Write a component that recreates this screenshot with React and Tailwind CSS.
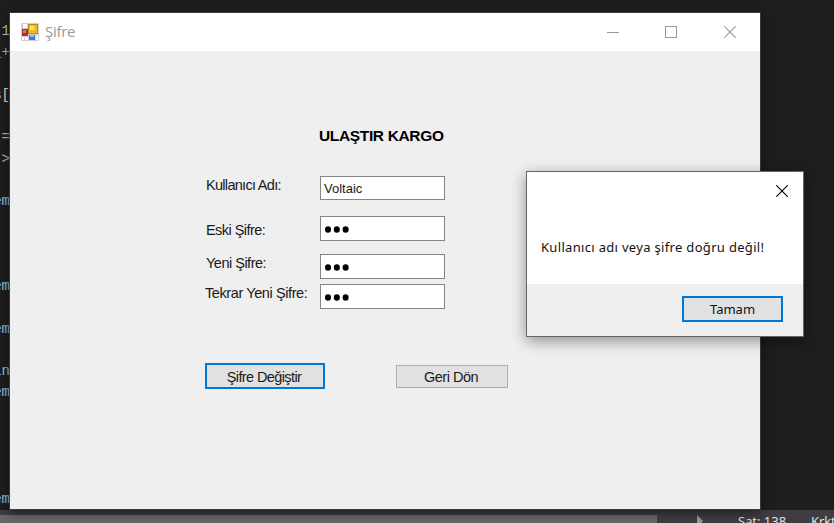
import React from 'react';

const codeRows = [
  ['1', 'text-[#b5cea8]'], ['_+', 'text-[#b4b4b4]'], ['', ''], ['s[', 'text-[#dcdcdc]'],
  ['', ''], ['=', 'text-[#b4b4b4]'], ['>', 'text-[#b4b4b4]'], ['', ''],
  ['em', 'text-[#86c6ee]'], ['', ''], ['', ''], ['', ''],
  ['em', 'text-[#86c6ee]'], ['', ''], ['em', 'text-[#86c6ee]'], ['', ''],
  ['in', 'text-[#86c6ee]'], ['em', 'text-[#86c6ee]'], ['', ''], ['', ''],
  ['', ''], ['', ''], ['em', 'text-[#86c6ee]'],
];

function Cross({ className }) {
  return (
    <svg className={className} width="12" height="12" viewBox="0 0 12 12" fill="none" stroke="currentColor" strokeWidth="1.1">
      <path d="M0.3 0.3l11.4 11.4M11.7 0.3l-11.4 11.4" />
    </svg>
  );
}

function FormIcon() {
  return (
    <svg width="18" height="18" viewBox="0 0 18 18">
      <rect width="18" height="18" rx="1" fill="#cfcfcf" />
      <rect x="2" y="1" width="4" height="4" fill="#fff" />
      <rect x="1" y="6" width="6" height="7" fill="#b5302a" />
      <rect x="2" y="7" width="3" height="3" fill="#dc7268" />
      <rect x="7" y="1" width="10" height="10" fill="#b8891c" />
      <rect x="8" y="2" width="8" height="8" fill="#f3bd22" />
      <rect x="9" y="3" width="4" height="4" fill="#ffe06b" />
      <rect x="8" y="12" width="6" height="5" fill="#3b78d8" />
      <rect x="9" y="12" width="4" height="2" fill="#8ab8f6" />
      <rect x="1" y="14" width="2" height="3" fill="#fff" />
      <rect x="4" y="14" width="3" height="3" fill="#fff" />
      <rect x="15" y="12" width="2" height="5" fill="#fff" />
    </svg>
  );
}

function Dots() {
  return (
    <svg width="26" height="9" viewBox="0 0 26 9" fill="#000">
      <ellipse cx="4" cy="4.5" rx="3" ry="3.3" />
      <ellipse cx="12.8" cy="4.5" rx="3" ry="3.3" />
      <ellipse cx="21.6" cy="4.5" rx="3" ry="3.3" />
    </svg>
  );
}

function MainWindow() {
  return (
    <section className="absolute left-[9px] top-[12px] flex h-[498px] w-[752px] flex-col border border-[#3a3a3c] bg-[#efefef] shadow-[0_3px_10px_rgba(0,0,0,0.5)]">
      <header className="flex h-[38px] shrink-0 items-center bg-white pl-[11px] text-[#999]">
        <FormIcon />
        <span className="-mt-[2px] ml-[6px] font-['Open_Sans','Noto_Sans',sans-serif] text-[15px] leading-[20px] tracking-[-0.3px]">Şifre</span>
        <div className="ml-auto flex items-center pr-[24px]">
          <span className="mr-[46px] h-px w-[12px] bg-[#999]" />
          <span className="mr-[47px] size-[12px] border border-[#999]" />
          <Cross />
        </div>
      </header>
      <main className="flex flex-col pl-[195px] font-['Liberation_Sans',Arial,sans-serif] text-[14.5px] leading-[18px] text-[#1a1a1a]">
        <h1 className="ml-[114px] mt-[76px] whitespace-nowrap text-[15.5px] font-bold leading-[18px] tracking-[-0.35px] text-black">ULAŞTIR KARGO</h1>
        <div className="mt-[31px] flex">
          <div className="flex w-[115px] flex-col whitespace-nowrap tracking-[-0.4px]">
            <label className="ml-px tracking-[-0.7px]">Kullanıcı Adı:</label>
            <label className="ml-px mt-[27px] tracking-[-0.55px]">Eski Şifre:</label>
            <label className="ml-px mt-[15px] tracking-[-0.5px]">Yeni Şifre:</label>
            <label className="mt-[12px]">Tekrar Yeni Şifre:</label>
          </div>
          <div className="flex w-[125px] flex-col">
            <div className="flex h-[24px] items-center border border-[#858585] bg-white pl-[3px] pt-[2px] text-[13px]">Voltaic</div>
            <div className="mt-[16px] flex h-[25px] items-center border border-[#858585] bg-white pl-[3px] pt-px"><Dots /></div>
            <div className="mt-[13px] flex h-[25px] items-center border border-[#858585] bg-white pl-[3px] pt-px"><Dots /></div>
            <div className="mt-[5px] flex h-[25px] items-center border border-[#858585] bg-white pl-[3px] pt-px"><Dots /></div>
          </div>
        </div>
        <div className="mt-[54px] flex items-center gap-[71px]">
          <button className="h-[26px] w-[120px] border-2 border-[#0078d7] bg-[#e1e1e1] pr-[2px] pt-px tracking-[-0.6px]">Şifre Değiştir</button>
          <button className="h-[23px] w-[112px] border border-[#adadad] bg-[#e1e1e1] pr-[2px] pt-px tracking-[-0.5px]">Geri Dön</button>
        </div>
      </main>
    </section>
  );
}

function MessageBox() {
  return (
    <section className="absolute left-[526px] top-[171px] flex h-[166px] w-[278px] flex-col border border-[#666] bg-white font-['Noto_Sans','Open_Sans',sans-serif] text-[13px] leading-[18px] text-[#111] shadow-[0_4px_14px_rgba(0,0,0,0.4)]">
      <div className="flex h-[38px] items-center justify-end pr-[15px] text-black">
        <Cross />
      </div>
      <p className="ml-[14px] mt-[28px] whitespace-nowrap tracking-[0.32px]">Kullanıcı adı veya şifre doğru değil!</p>
      <div className="mt-auto flex h-[52px] justify-end bg-[#efefef] pr-[20px] pt-[12px]">
        <button className="h-[26px] w-[101px] border-2 border-[#0078d7] bg-[#e1e1e1]">Tamam</button>
      </div>
    </section>
  );
}

export default function App() {
  return (
    <div className="relative flex h-[523px] w-[834px] flex-col overflow-hidden bg-[#1e1e1e]">
      <div className="flex h-[510px] w-[10px] shrink-0 flex-col items-end overflow-hidden pt-[20px] font-['Liberation_Mono',monospace] text-[14px]">
        {codeRows.map(([text, color], i) => (
          <span key={i} className={`h-[21.25px] shrink-0 leading-[22px] ${color}`}>{text}</span>
        ))}
      </div>
      <footer className="flex h-[13px] shrink-0 items-start overflow-hidden bg-[#3e3e42] font-['Open_Sans','Noto_Sans',sans-serif] text-[13px] leading-[18px] text-[#e8e8e8]">
        <div className="mt-[5px] h-[8px] w-[657px] shrink-0 bg-[#686868]" />
        <svg className="ml-[40px] mt-[5px] shrink-0" width="6" height="12" viewBox="0 0 6 12"><path d="M0 0l6 6-6 6z" fill="#999" /></svg>
        <span className="ml-[35px] mt-[2px] w-[73px] shrink-0 whitespace-nowrap">Sat: 138</span>
        <span className="mt-[2px] whitespace-nowrap">Krkt</span>
      </footer>
      <MainWindow />
      <MessageBox />
    </div>
  );
}
